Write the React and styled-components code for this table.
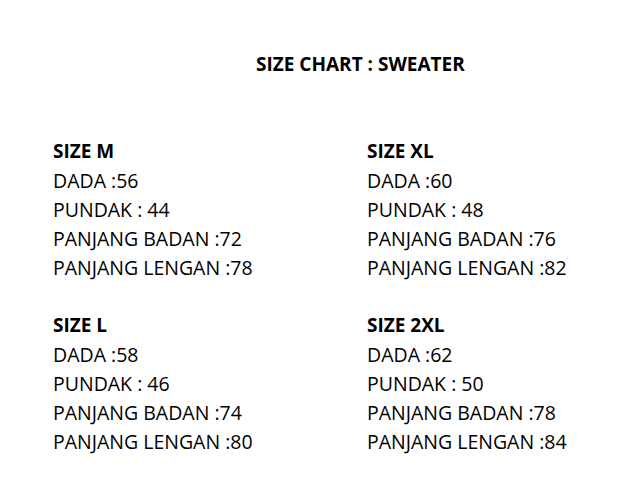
import React from "react";
import styled, { createGlobalStyle } from "styled-components";

const GlobalStyle = createGlobalStyle`
  html, body {
    margin: 0;
    padding: 0;
    background: #ffffff;
  }
  body {
    font-family: "Open Sans", "Liberation Sans", sans-serif;
    color: #000000;
  }
`;

const sizes = [
  { name: "SIZE M", dada: ":56", pundak: ": 44", badan: ":72", lengan: ":78" },
  { name: "SIZE XL", dada: ":60", pundak: ": 48", badan: ":76", lengan: ":82" },
  { name: "SIZE L", dada: ":58", pundak: ": 46", badan: ":74", lengan: ":80" },
  { name: "SIZE 2XL", dada: ":62", pundak: ": 50", badan: ":78", lengan: ":84" },
];

const Page = styled.div`
  width: 627px;
  height: 503px;
  box-sizing: border-box;
  padding: 50px 0 0 53px;
  font-size: 19.5px;
  line-height: 29px;
`;

const Title = styled.h1`
  margin: 0 0 58px 203px;
  font-size: 19px;
  line-height: 29px;
  font-weight: 700;
`;

const Grid = styled.div`
  display: grid;
  grid-template-columns: 314px 1fr;
  row-gap: 29px;
`;

const Block = styled.div`
  display: flex;
  flex-direction: column;
`;

const Heading = styled.div`
  font-weight: 700;
  font-size: 19px;
`;

const Line = styled.div`
  white-space: nowrap;
`;

export default function App() {
  return (
    <>
      <GlobalStyle />
      <Page>
        <Title>SIZE CHART : SWEATER</Title>
        <Grid>
          {sizes.map((s) => (
            <Block key={s.name}>
              <Heading>{s.name}</Heading>
              <Line>DADA {s.dada}</Line>
              <Line>PUNDAK {s.pundak}</Line>
              <Line>PANJANG BADAN {s.badan}</Line>
              <Line>PANJANG LENGAN {s.lengan}</Line>
            </Block>
          ))}
        </Grid>
      </Page>
    </>
  );
}
